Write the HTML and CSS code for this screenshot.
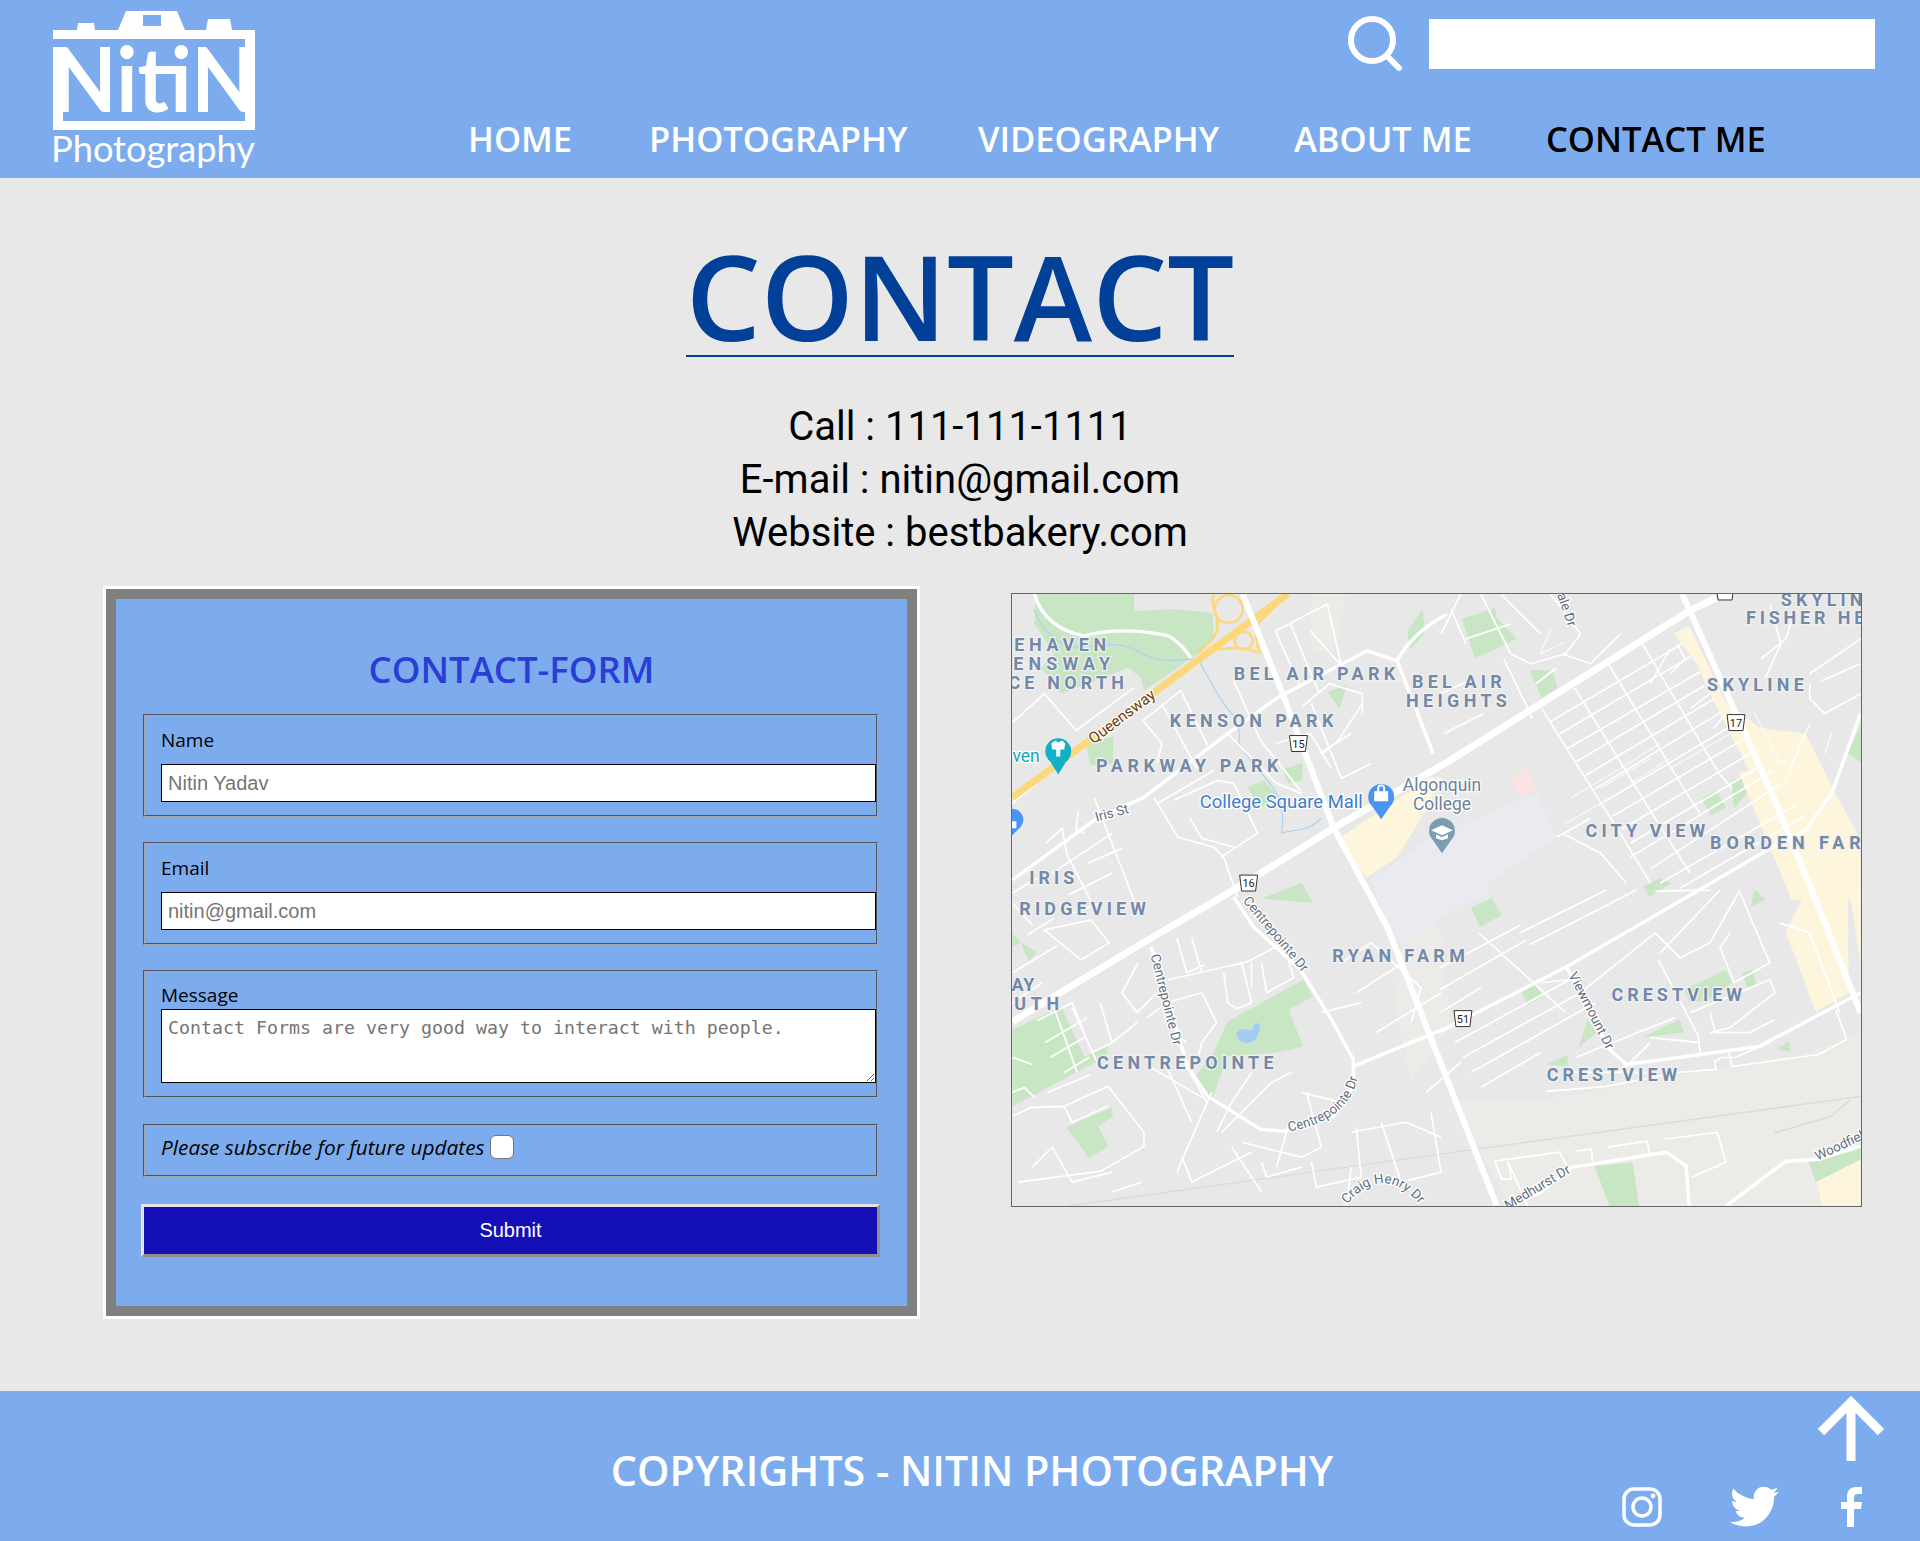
FILE: index.html
```html
<!DOCTYPE html>
<html lang="en">
<head>
    <meta charset="UTF-8">
    <meta name="viewport" content="width=device-width, initial-scale=1.0">
    <title>Contact - Nitin Photography</title>
    <link rel="stylesheet" href="styles.css">
</head>
<body>
    <header class="site-header">
        <a href="#" class="logo">
            <svg width="202" height="178" viewBox="53 0 202 178">
                <path class="logo-fill" d="M53 30H77L78 23H94L95 30H118L126 11H177L185 30H206L208 19H230L232 30H255V121H245V39H53Z"/>
                <rect class="logo-window" x="143" y="15" width="18" height="11"/>
                <path class="logo-fill" d="M53 47H63V121H255V130H53Z"/>
                <text class="logo-name" x="52" y="112" textLength="204" lengthAdjust="spacingAndGlyphs">NitiN</text>
                <text class="logo-sub" x="51" y="162" textLength="204" lengthAdjust="spacingAndGlyphs">Photography</text>
            </svg>
        </a>
        <div class="header-right">
            <div class="search-row">
                <svg class="search-icon" width="58" height="56" viewBox="0 0 58 56">
                    <circle cx="25" cy="24" r="21"/>
                    <path d="M40 40L52 52"/>
                </svg>
                <input type="text" class="search-box">
            </div>
            <nav class="main-nav">
                <a href="#">HOME</a>
                <a href="#">PHOTOGRAPHY</a>
                <a href="#">VIDEOGRAPHY</a>
                <a href="#">ABOUT ME</a>
                <a href="#" class="active">CONTACT ME</a>
            </nav>
        </div>
    </header>

    <main class="content">
        <div class="title-wrap">
            <h1 class="page-title">CONTACT</h1>
        </div>
        <div class="contact-info">
            <p>Call : 111-111-1111</p>
            <p>E-mail : nitin@gmail.com</p>
            <p>Website : bestbakery.com</p>
        </div>

        <div class="contact-row">
            <section class="form-card">
                <h2>CONTACT-FORM</h2>
                <form class="contact-form">
                    <fieldset class="field">
                        <label for="name">Name</label>
                        <input type="text" id="name" placeholder="Nitin Yadav">
                    </fieldset>
                    <fieldset class="field">
                        <label for="email">Email</label>
                        <input type="email" id="email" placeholder="nitin@gmail.com">
                    </fieldset>
                    <fieldset class="field field-message">
                        <label for="message">Message</label>
                        <textarea id="message" placeholder="Contact Forms are very good way to interact with people."></textarea>
                    </fieldset>
                    <fieldset class="field field-check">
                        <label for="subscribe">Please subscribe for future updates</label>
                        <input type="checkbox" id="subscribe">
                    </fieldset>
                    <input type="submit" value="Submit">
                </form>
            </section>

            <div class="map-box">
                <svg class="map" width="849" height="612" viewBox="0 0 851 614">
                    <defs>
                        <path id="curve-centrepointe" d="M262 541Q345 534 349 470"/>
                        <path id="curve-craig" d="M336 612Q372 570 408 612"/>
                    </defs>

                    <!-- land use -->
                    <path class="beige" d="M440 510L550 505L800 460L851 440V614H500ZM300 0L335 0L325 55L300 60ZM395 290L430 340L440 430L400 490L385 420Z"/>
                    <path class="campus" d="M359 287L416 247L462 227L526 199L546 244L476 290L479 307L452 310L429 327L379 354L372 320Z"/>
                    <path class="pink" d="M500 184L517 175L526 197L509 204Z"/>
                    <path class="cream" d="M329 244L419 184L432 184L409 227L386 264L356 284L342 270Z"/>
                    <path class="cream" d="M664 40L679 32L715 107L749 134L796 140L819 187L851 247V307H782L729 180L739 177L700 100L688 72Z"/>
                    <path class="cream" d="M776 339L792 307L800 297L838 297L839 400L806 419ZM800 297H851V370L840 300Z"/>
                    <path class="cream" d="M807 590L851 567V614H812Z"/>
                    <path class="green" d="M24 0H122V17L162 15L201 19L202 44L186 60L132 97L129 84L116 74L49 100L29 74L42 60L22 30Z"/>
                    <path class="green" d="M74 150L101 143L101 170L78 172Z"/>
                    <path class="green" d="M316 98L336 91L328 115ZM271 176L291 169L291 187L277 190ZM236 194L252 187L268 204L248 214ZM396 37L412 15L413 40L399 56Z"/>
                    <path class="green" d="M251 305L290 290L302 310L245 305Z"/>
                    <path class="green" d="M451 25L484 14L486 24L506 45L482 57L464 64Z"/>
                    <path class="green" d="M519 76L542 77L547 94L531 104ZM691 205L706 197L716 214L701 222ZM721 187L731 184L737 200L724 215ZM851 131L838 160L851 169ZM633 294L649 285L661 290L639 304ZM741 307L746 297L756 307Z"/>
                    <path class="green" d="M216 429L292 387L301 404L277 417L292 454L266 460L216 464L199 510L181 487L202 460Z"/>
                    <path class="green" d="M0 437L49 414L72 464L96 454L94 464L0 514Z"/>
                    <path class="green" d="M54 535L100 515L101 524L86 534L96 554L77 566Z"/>
                    <path class="green" d="M0 340L9 350L0 354ZM9 350L24 359L17 369L12 360Z"/>
                    <path class="green" d="M460 315L481 305L491 322L469 334ZM511 400L524 390L532 404L517 412ZM568 455L577 427L586 440ZM536 472L557 462L557 474ZM632 445L669 427L674 440ZM674 397L716 377L722 390L696 409L679 409ZM732 380L742 377L747 392L737 395ZM766 457L779 449L781 459ZM584 574L622 570L629 614H599ZM799 570L851 553V567L806 590ZM741 314L744 297L754 307Z"/>
                    <path class="water" d="M225 440C232 433 238 440 242 436C240 432 244 430 246 431C252 431 246 443 245 446C240 452 232 451 228 448C226 446 224 442 225 440Z"/>
                    <path class="stream" d="M22 15C26 30 36 40 50 50C70 60 100 40 130 60C150 70 170 66 186 65C200 90 210 110 222 122C225 130 230 140 227 150C235 160 240 170 250 180C262 195 275 205 270 240C285 235 295 240 310 225"/>

                    <!-- rail line -->
                    <path class="rail" d="M56 614L429 562L851 504M764 541L821 524L840 508"/>

                    <!-- minor streets -->
                    <path class="street" d="M0 129L32 100L64 137L122 94M0 210L30 185M264 37L316 10M264 37L289 94M279 30L308 100M299 37L330 72L316 10M351 110L327 147L312 160M131 127L169 97L196 152M131 127L150 150L145 170M150 110L185 175M222 87L249 147L289 197M216 140L265 190L290 200M82 204L122 307M142 204L166 244L202 254L212 264L226 304M146 210L202 177M162 207L206 187L222 190L246 240L209 264M178 225L190 245L222 254M66 218L64 236L72 240M34 250L50 235L55 262L85 320M40 280L100 240M76 270L110 255M56 302L100 280M60 320L90 310M0 300L25 285M0 310L20 332"/>
                    <path class="street" d="M291 113L318 90L351 100L351 120M300 110L330 185L360 170M264 150L299 140L320 175M308 160L340 140M440 15L455 50M430 40L450 0M470 0L500 60L520 70L555 60L570 40L540 0M455 45L500 30M490 0L530 40M493 65L522 125M462 85L430 100M473 120L433 140M525 90L545 75M551 60L580 70L610 40"/>
                    <path class="street" d="M540 128L672 50M548 141L680 63M557 155L690 78M566 168L694 92M575 182L704 105M584 196L712 118M593 209L722 132M602 223L735 145M611 236L744 158M620 250L752 172M620 264L762 178M640 276L772 190M650 290L786 212M670 295L796 222"/>
                    <path class="street" d="M531 115L616 250L640 290M564 94L646 227L680 280M599 72L679 204L690 220M632 50L709 180L722 195M552 240L590 260L616 290M546 244L580 225M640 90L660 55M667 50L675 65L660 80M700 100L680 115M716 120L703 135M751 65L776 45L784 20M800 80L851 45M800 90L800 105L815 120L851 100M812 87L851 70M760 10L771 50L755 85"/>
                    <path class="street" d="M444 450L559 387M452 465L570 400M460 480L585 410M470 495L530 460M509 340L596 297M519 352L626 297M429 397L516 347M429 420L470 395M429 375L510 332M530 390L559 387M468 340L517 385L555 420M645 298L700 297M650 360L710 297M570 400L645 340L670 365L700 350L730 297M648 367L688 443L690 460M680 420L760 387L765 400L720 435L700 440M700 420L705 440L740 440L765 427M640 445L690 450M615 472L610 480L640 450M565 465L665 425M561 480L645 480M705 470L711 465L725 465L760 450M536 499L596 494L669 480L706 477L704 467M719 460L722 474L759 469L787 465L809 462L837 447L826 417M720 340L710 355L724 390L760 370L730 300M770 330L800 340L830 420"/>
                    <path class="street" d="M32 337L69 367L97 350L79 327ZM15 342L42 325M0 380L45 353M0 410L30 390M0 524L19 515L52 514L96 494L132 540L132 554L89 579L6 590M35 500L79 482M52 514L60 530L96 514M136 473L190 505M156 387L236 369L272 350M240 370L240 395M212 380L216 410L225 416L240 410L230 370M250 370L255 400L282 385L272 350M180 345L190 380M165 345L175 380L193 372M126 370L110 400L125 420L145 400M135 425L155 410L190 400L205 430L190 450L185 470M160 440L175 450M88 410L100 450L125 430M60 410L80 460L100 450"/>
                    <path class="street" d="M25 428L60 410M33 450L75 425M38 465L72 445M52 480L77 465M40 410L65 480M60 415L85 470M0 465L20 472M0 500L12 495L22 505M170 465L195 510M155 475L180 530M200 500L165 580M240 480L220 510L205 540M210 540L240 510L260 490L280 480M290 500L330 510M278 530L265 575M230 550L290 565L310 555L295 500M250 570L255 585L290 575M300 570L305 595L350 585L345 535M340 540L395 530L430 545M370 530L390 590L430 580L420 520M415 500L450 470M345 400L400 365M365 440L430 400M310 420L350 410M330 370L360 350L410 395L400 430"/>
                    <path class="street" d="M100 600L130 590M20 575L40 555L60 590L100 580M170 565L180 590L200 580L240 560M220 555L250 600M340 575L335 614M484 569L549 560L557 575M484 569L491 587L501 587L497 569M566 559L581 557L582 569M597 555L637 549L639 562M654 547L707 540L716 570L682 585M497 569L517 614"/>
                    <path class="street thin" d="M540 35L530 60L555 48M660 175L720 140M620 190L660 165M610 175L650 150M590 195L640 165M560 205L610 175M555 230L600 205M780 175L800 130L775 190M745 120L770 170L780 165M815 160L822 140"/>

                    <!-- highway -->
                    <circle class="hwy-ramp" cx="217" cy="15" r="14"/>
                    <circle class="hwy-ramp" cx="232" cy="47" r="9"/>
                    <path class="hwy-ramp" d="M202 0C198 10 206 20 206 30C206 38 202 44 199 47L186 60M196 57C215 54 235 52 246 59M249 60C244 50 244 38 246 30L276 0"/>
                    <path class="hwy" d="M0 204L276 0"/>

                    <!-- collector roads -->
                    <path class="road-mid" d="M22 0Q33 35 72 42Q110 32 157 42Q170 50 179 64"/>
                    <path class="road-mid" d="M0 287L82 227L132 204L216 140L266 104L356 57L386 67Q400 40 436 20M386 67L422 160"/>
                    <path class="road-mid" d="M222 304L242 334L289 377L322 430L342 467L342 494L322 524L272 539L249 537L196 504L176 474L139 354"/>
                    <path class="road-mid" d="M342 474L439 434"/>
                    <path class="road-mid" d="M599 457L616 472L749 454L851 400M556 374L599 457"/>
                    <path class="road-mid" d="M500 614L530 600L562 575L656 560L676 574L679 614M716 614L776 569L809 567L851 554"/>
                    <path class="road-mid" d="M429 439L556 374L689 297L762 254L796 237L822 200L851 120"/>

                    <!-- arterial roads -->
                    <path class="road" d="M231 0L271 100L322 234L376 334L439 494L486 614"/>
                    <path class="road" d="M672 0L726 120L762 200L806 307L851 420"/>
                    <path class="road wide" d="M0 429L136 347L222 297L322 235L439 167L679 17L706 4"/>

                    <!-- area names -->
                    <text class="area" x="2" y="57" textLength="92">EHAVEN</text>
                    <text class="area" x="1" y="76" textLength="97">ENSWAY</text>
                    <text class="area" x="-4" y="95" textLength="116">CE NORTH</text>
                    <text class="area" x="222" y="86" textLength="162">BEL AIR PARK</text>
                    <text class="area" x="401" y="94" textLength="90">BEL AIR</text>
                    <text class="area" x="395" y="113" textLength="101">HEIGHTS</text>
                    <text class="area" x="158" y="133" textLength="164">KENSON PARK</text>
                    <text class="area" x="84" y="179" textLength="183">PARKWAY PARK</text>
                    <text class="area" x="17" y="291" textLength="45">IRIS</text>
                    <text class="area" x="7" y="322" textLength="127">RIDGEVIEW</text>
                    <text class="area" x="-1" y="398" textLength="23">AY</text>
                    <text class="area" x="2" y="417" textLength="45">UTH</text>
                    <text class="area" x="85" y="477" textLength="177">CENTREPOINTE</text>
                    <text class="area" x="321" y="369" textLength="133">RYAN FARM</text>
                    <text class="area" x="601" y="408" textLength="131">CRESTVIEW</text>
                    <text class="area" x="536" y="489" textLength="131">CRESTVIEW</text>
                    <text class="area" x="575" y="244" textLength="120">CITY VIEW</text>
                    <text class="area" x="700" y="256" textLength="172">BORDEN FARM</text>
                    <text class="area" x="697" y="97" textLength="97">SKYLINE</text>
                    <text class="area" x="771" y="12" textLength="96">SKYLINE</text>
                    <text class="area" x="736" y="30" textLength="190">FISHER HEIGHTS</text>

                    <!-- street names -->
                    <text class="hwy-name" transform="translate(113 127) rotate(-37)">Queensway</text>
                    <text class="street-name" transform="translate(101 224) rotate(-15)">Iris St</text>
                    <text class="street-name" transform="translate(552 17) rotate(71)">ale Dr</text>
                    <text class="street-name" transform="translate(261 344) rotate(50)">Centrepointe Dr</text>
                    <text class="street-name" transform="translate(150 408) rotate(76)">Centrepointe Dr</text>
                    <text class="street-name"><textPath href="#curve-centrepointe" startOffset="50%">Centrepointe Dr</textPath></text>
                    <text class="street-name" transform="translate(577 420) rotate(63)">Viewmount Dr</text>
                    <text class="street-name"><textPath href="#curve-craig" startOffset="50%">Craig Henry Dr</textPath></text>
                    <text class="street-name" transform="translate(529 599) rotate(-31)">Medhurst Dr</text>
                    <text class="street-name" transform="translate(835 556) rotate(-25)">Woodfield</text>

                    <!-- places -->
                    <text class="poi-blue" x="188" y="215">College Square Mall</text>
                    <text class="poi-grey" x="431" y="198">Algonquin</text>
                    <text class="poi-grey" x="431" y="217">College</text>
                    <text class="poi-teal" x="0" y="169">ven</text>

                    <path class="pin-teal" d="M46 181L38 168A13 13 0 1 1 54 168Z"/>
                    <path class="pin-mark" d="M44 163V156H40L39 150L43 147L46 149L50 147L53 150L52 156H48V163Z"/>
                    <path class="pin-blue" d="M-2 244L-8 234A11 11 0 1 1 8 234Z"/>
                    <rect class="pin-mark" x="-4" y="228" width="8" height="7"/>
                    <path class="pin-blue" d="M370 226L361 213A13 13 0 1 1 379 213Z"/>
                    <path class="pin-mark" d="M363 198H377V208H363ZM366 198V195A4 4 0 0 1 374 195V198H372V195A2 2 0 0 0 368 195V198Z"/>
                    <path class="pin-school" d="M431 260L422 247A13 13 0 1 1 440 247Z"/>
                    <path class="pin-mark" d="M431 232L442 237L431 242L420 237ZM425 241L431 244L437 241V245L431 247L425 245Z"/>

                    <!-- route shields -->
                    <g class="shield" transform="translate(287 150)"><path d="M-9 -8H9L7 8H-7Z"/><text y="4">15</text></g>
                    <g class="shield" transform="translate(237 290)"><path d="M-9 -8H9L7 8H-7Z"/><text y="4">16</text></g>
                    <g class="shield" transform="translate(726 129)"><path d="M-9 -8H9L7 8H-7Z"/><text y="4">17</text></g>
                    <g class="shield" transform="translate(452 426)"><path d="M-9 -8H9L7 8H-7Z"/><text y="4">51</text></g>
                    <g class="shield" transform="translate(715 -1)"><path d="M-9 -8H9L7 7H-7Z"/></g>
                </svg>
            </div>
        </div>
    </main>

    <footer class="site-footer">
        <p class="copyright">COPYRIGHTS - NITIN PHOTOGRAPHY</p>
        <div class="footer-right">
            <a href="#" class="to-top">
                <svg width="66" height="66" viewBox="0 0 66 66"><path d="M33 66V8M3 37L33 7L63 37"/></svg>
            </a>
            <div class="social">
                <svg class="insta" width="40" height="40" viewBox="0 0 40 40">
                    <rect x="2" y="2" width="36" height="36" rx="10"/>
                    <circle cx="20" cy="20" r="9"/>
                    <circle class="dot" cx="31" cy="9" r="2.4"/>
                </svg>
                <svg class="bird" width="49" height="40" viewBox="0 0 24 19.6" preserveAspectRatio="none">
                    <path transform="translate(0 -2.4)" d="M23.953 4.57a10 10 0 01-2.825.775 4.958 4.958 0 002.163-2.723c-.951.555-2.005.959-3.127 1.184a4.92 4.92 0 00-8.384 4.482C7.69 8.095 4.067 6.13 1.64 3.162a4.822 4.822 0 00-.666 2.475c0 1.71.87 3.213 2.188 4.096a4.904 4.904 0 01-2.228-.616v.06a4.923 4.923 0 003.946 4.827 4.996 4.996 0 01-2.212.085 4.936 4.936 0 004.604 3.417 9.867 9.867 0 01-6.102 2.105c-.39 0-.779-.023-1.17-.067a13.995 13.995 0 007.557 2.209c9.053 0 13.998-7.496 13.998-13.985 0-.21 0-.42-.015-.63A9.935 9.935 0 0024 4.59z"/>
                </svg>
                <svg class="fb" width="21" height="40" viewBox="0 0 21 40">
                    <path d="M6 40V22H0V15H6V9.5C6 3 10 0 15 0H21V7H17C14 7 13 8 13 10.500V15H21L20 22H13V40Z"/>
                </svg>
            </div>
        </div>
    </footer>
</body>
</html>
```

FILE: styles.css
```css
* {
    box-sizing: border-box;
}
body {
    margin: 0;
    background-color: #e8e8e8;
    font-family: "Open Sans", Arial, sans-serif;
    color: #000;
}

/* header */
.site-header {
    height: 178px;
    background-color: #7dacee;
    display: flex;
    justify-content: space-between;
    padding: 0 45px 0 53px;
}
.logo svg {
    display: block;
    overflow: visible;
}
.logo-fill {
    fill: #fff;
}
.logo-window {
    fill: #7dacee;
}
.logo-name {
    fill: #fff;
    font-family: Lato, sans-serif;
    font-size: 90px;
    font-weight: 700;
}
.logo-sub {
    fill: #fff;
    font-family: Lato, sans-serif;
    font-size: 37px;
}
.header-right {
    display: flex;
    flex-direction: column;
    align-items: flex-end;
}
.search-row {
    display: flex;
    align-items: center;
    gap: 24px;
    height: 56px;
    margin-top: 16px;
}
.search-icon {
    fill: none;
    stroke: #fff;
    stroke-width: 6;
    stroke-linecap: round;
}
.search-box {
    width: 446px;
    height: 50px;
    border: none;
    background-color: #fff;
}
.main-nav {
    display: grid;
    grid-template-columns: 181px 329px 316px 252px 219px;
    margin: 45px 110px 0 0;
}
.main-nav a {
    color: #fff;
    font-size: 34.5px;
    font-weight: 600;
    line-height: 44px;
    text-decoration: none;
    white-space: nowrap;
}
.main-nav a.active {
    color: #000;
}

/* title and contact lines */
.title-wrap {
    text-align: center;
    height: 179px;
}
.page-title {
    display: inline-block;
    margin: 0;
    height: 179px;
    padding: 57px 0 0;
    border-bottom: 2px solid #004098;
    color: #004098;
    font-size: 118.5px;
    font-weight: 600;
    line-height: 120px;
}
.contact-info {
    margin-top: 43px;
    text-align: center;
    font-family: Roboto, sans-serif;
    font-size: 40px;
    line-height: 53px;
}
.contact-info p {
    margin: 0;
}

/* form and map */
.contact-row {
    display: flex;
    align-items: flex-start;
    padding: 30px 0 75px 106px;
}
.form-card {
    width: 811px;
    height: 727px;
    border: 10px solid #808080;
    outline: 3px solid #fff;
    background-color: #7dacee;
    padding: 40px 29px 0 27px;
}
.form-card h2 {
    margin: 0 0 15px 2px;
    text-align: center;
    color: #2a3dd6;
    font-size: 36.5px;
    font-weight: 600;
    line-height: 60px;
}
.contact-form {
    display: flex;
    flex-direction: column;
    gap: 25px;
}
.field {
    margin: 0;
    min-width: 0;
    height: 103px;
    padding: 0 0 0 16px;
    border: 2px groove #a8a8a8;
}
.field label {
    display: block;
    font-size: 19px;
    line-height: 48px;
}
.field input[type="text"],
.field input[type="email"] {
    display: block;
    width: 715px;
    height: 38px;
    padding: 0 6px;
    border: 1px solid #000;
    font-family: "Liberation Sans", Arial, sans-serif;
    font-size: 20px;
}
.field-message {
    height: 128px;
    margin-bottom: 1px;
}
.field-message label {
    height: 37px;
    line-height: 47px;
}
.field-message textarea {
    display: block;
    width: 715px;
    height: 74px;
    padding: 7px 6px;
    border: 1px solid #000;
    font-family: "DejaVu Sans Mono", monospace;
    font-size: 18.27px;
    line-height: 22px;
}
.field-check {
    height: 53px;
    padding-top: 9px;
    display: flex;
    align-items: flex-start;
    gap: 5px;
}
.field-check label {
    font-size: 20.800px;
    font-style: italic;
    line-height: 24px;
}
.field-check input {
    appearance: none;
    width: 24px;
    height: 24px;
    margin: 0;
    background-color: #fff;
    border: 1px solid #767676;
    border-radius: 6px;
}
.contact-form input[type="submit"] {
    width: 739px;
    height: 53px;
    margin: 2px 0 0 -2px;
    border: 3px outset #e4e4e4;
    background-color: #1510b5;
    color: #fff;
    font-family: "Liberation Sans", Arial, sans-serif;
    font-size: 20px;
}
.map-box {
    margin: 4px 0 0 94px;
    border: 1px solid #666;
    line-height: 0;
}
.map {
    display: block;
    background-color: #e8e8e8;
}

/* map layers */
.beige { fill: #ecebe8; }
.campus { fill: #e9ebf1; }
.pink { fill: #fbe3e1; }
.cream { fill: #fdf5dc; }
.green { fill: #c8e6c4; }
.water { fill: #a3ccf5; }
.stream { fill: none; stroke: #a9d2f5; stroke-width: 1.2; }
.rail { fill: none; stroke: #d6dae1; stroke-width: 1.4; }
.street { fill: none; stroke: #fff; stroke-width: 1.7; stroke-linejoin: round; }
.street.thin { stroke-width: 1; }
.road-mid { fill: none; stroke: #fff; stroke-width: 3.5; stroke-linejoin: round; }
.road { fill: none; stroke: #fff; stroke-width: 6; stroke-linejoin: round; }
.road.wide { stroke-width: 7; }
.hwy { fill: none; stroke: #fdd87a; stroke-width: 7; }
.hwy-ramp { fill: none; stroke: #fdd87a; stroke-width: 2.6; }
.area {
    fill: #7389a8;
    stroke: #f1f1f1;
    stroke-width: 2.5px;
    paint-order: stroke;
    font-family: Roboto, sans-serif;
    font-size: 18px;
    font-weight: 700;
}
.hwy-name {
    fill: #6b3d0c;
    stroke: #fff;
    stroke-width: 2.5px;
    paint-order: stroke;
    font-family: Roboto, sans-serif;
    font-size: 15.5px;
    text-anchor: middle;
}
.street-name {
    fill: #5f6e80;
    stroke: #fff;
    stroke-width: 2.5px;
    paint-order: stroke;
    font-family: Roboto, sans-serif;
    font-size: 13.5px;
    text-anchor: middle;
}
.poi-blue {
    fill: #3f7cc9;
    stroke: #fff;
    stroke-width: 2.5px;
    paint-order: stroke;
    font-family: Roboto, sans-serif;
    font-size: 18.500px;
}
.poi-grey {
    fill: #6c8296;
    stroke: #fff;
    stroke-width: 2.5px;
    paint-order: stroke;
    font-family: Roboto, sans-serif;
    font-size: 17.500px;
    text-anchor: middle;
}
.poi-teal {
    fill: #12a5b8;
    stroke: #fff;
    stroke-width: 2.5px;
    paint-order: stroke;
    font-family: Roboto, sans-serif;
    font-size: 17.500px;
}
.pin-teal { fill: #12b0c6; }
.pin-blue { fill: #4a94f3; }
.pin-school { fill: #7b9cb1; }
.pin-mark { fill: #fff; }
.shield path {
    fill: #fff;
    stroke: #333;
    stroke-width: 1;
}
.shield text {
    fill: #222;
    font-family: Roboto, sans-serif;
    font-size: 11px;
    text-anchor: middle;
}

/* footer */
.site-footer {
    height: 150px;
    background-color: #7dacee;
    display: flex;
    padding-right: 36px;
}
.copyright {
    flex: 1;
    margin: 0;
    padding: 8px 0 0 322px;
    display: flex;
    align-items: center;
    justify-content: center;
    color: #fff;
    font-size: 41.3px;
    font-weight: 600;
    white-space: nowrap;
}
.footer-right {
    width: 262px;
    padding-top: 4px;
    display: flex;
    flex-direction: column;
    align-items: flex-end;
}
.to-top {
    display: block;
    height: 66px;
}
.to-top svg {
    display: block;
    fill: none;
    stroke: #fff;
    stroke-width: 9;
}
.social {
    display: flex;
    align-items: flex-start;
    margin: 26px 22px 0 0;
}
.insta {
    fill: none;
    stroke: #fff;
    stroke-width: 3.5;
}
.insta .dot {
    fill: #fff;
    stroke: none;
}
.bird {
    margin-left: 68px;
    fill: #fff;
}
.fb {
    margin-left: 62px;
    fill: #fff;
}
```
